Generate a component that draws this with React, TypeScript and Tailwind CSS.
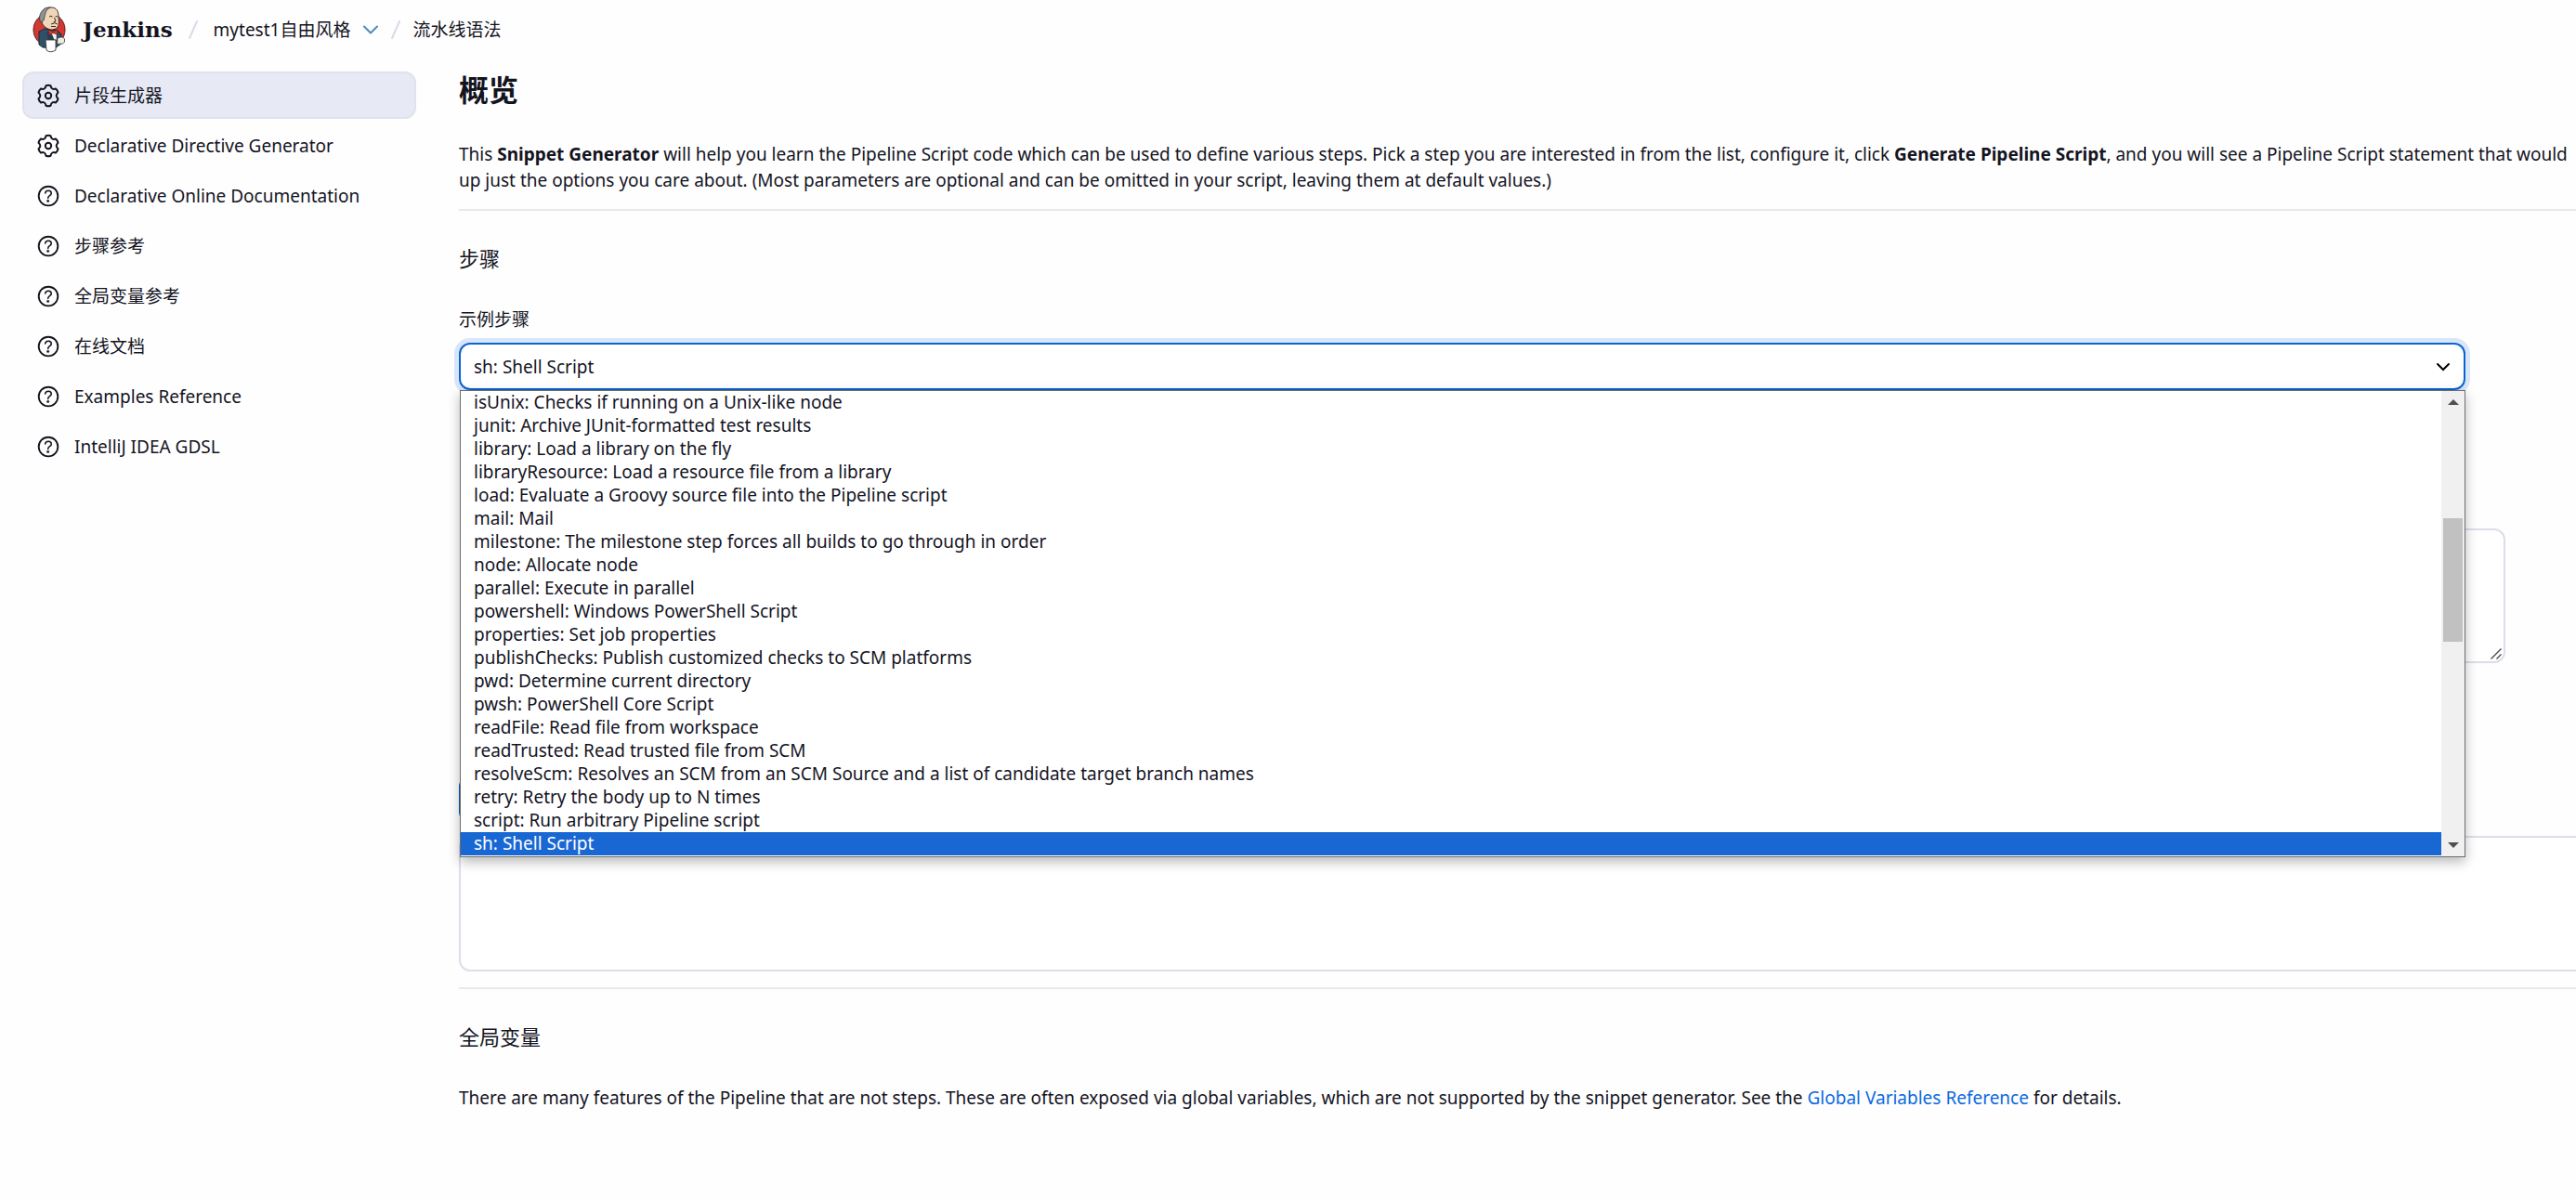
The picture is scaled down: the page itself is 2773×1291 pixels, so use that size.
import { useState } from "react";
import { ChevronDown } from "lucide-react";
import { IoHelpCircleOutline } from "react-icons/io5";

const sidebarItems = [
  { label: "片段生成器", icon: "settings", active: true },
  { label: "Declarative Directive Generator", icon: "settings" },
  { label: "Declarative Online Documentation", icon: "help" },
  { label: "步骤参考", icon: "help" },
  { label: "全局变量参考", icon: "help" },
  { label: "在线文档", icon: "help" },
  { label: "Examples Reference", icon: "help" },
  { label: "IntelliJ IDEA GDSL", icon: "help" },
];

const steps = [
  "isUnix: Checks if running on a Unix-like node",
  "junit: Archive JUnit-formatted test results",
  "library: Load a library on the fly",
  "libraryResource: Load a resource file from a library",
  "load: Evaluate a Groovy source file into the Pipeline script",
  "mail: Mail",
  "milestone: The milestone step forces all builds to go through in order",
  "node: Allocate node",
  "parallel: Execute in parallel",
  "powershell: Windows PowerShell Script",
  "properties: Set job properties",
  "publishChecks: Publish customized checks to SCM platforms",
  "pwd: Determine current directory",
  "pwsh: PowerShell Core Script",
  "readFile: Read file from workspace",
  "readTrusted: Read trusted file from SCM",
  "resolveScm: Resolves an SCM from an SCM Source and a list of candidate target branch names",
  "retry: Retry the body up to N times",
  "script: Run arbitrary Pipeline script",
  "sh: Shell Script",
];

const JenkinsLogo = () => (
  <svg viewBox="0 0 36 50" className="h-[50px] w-9" aria-hidden="true">
    <ellipse cx="18" cy="25" rx="17" ry="17.5" fill="#d33833" stroke="#5b1a18" strokeWidth="1" />
    {/* Suit */}
    <path d="M7 27 L13 24 L27 26 L31 30 L31 40 L24 45 L11 44 L7 41 Z" fill="#2f5066" stroke="#1b2c38" strokeWidth="1" />
    <path d="M19 28 L26 29 L26 36 L22 36 Z" fill="#f5f5f2" stroke="#33434d" strokeWidth=".6" />
    <path d="M21 30 L24 37 L17 37 L15 27 Z" fill="#24404f" />
    {/* Head */}
    <path d="M10 11 C10 4 15 1 20 1 C26 1 28 5 28 11 L28.500 18 C28 23 24 25 20 25 C14 24 11 20 10 17 Z" fill="#f0d6b7" stroke="#231f20" strokeWidth=".9" />
    <path d="M9 17 C6 13 8 6 12 3 C14 1 17 1 19 1 C14 4 14 7 13 11 L12 15 Z" fill="#8d9294" stroke="#3a3a3a" strokeWidth=".8" />
    <path d="M18 11 q2 -1.500 3.500 0 M24.500 11 q1.500 -1 2.500 0 M23.500 12 L25 16 L22.500 17 M20 19 q4 -2.500 7 0 M20 21.500 h5" fill="none" stroke="#3a2a22" strokeWidth="1" />
    {/* Bow tie */}
    <path d="M17 25 L22 27 L27 25 L27 30 L22 28.500 L18 31 Z" fill="#d33833" stroke="#7c1714" strokeWidth=".7" />
    {/* Mug and hand */}
    <path d="M27 34 q6 -2.500 7.500 1 q1 4 -2 5 l-6 .5 z" fill="#f0ece4" stroke="#3a3a3a" strokeWidth=".8" />
    <path d="M14 36 L25 36 L25 47 Q19 50.500 15 47 Z" fill="#fff" stroke="#3a3a3a" strokeWidth=".9" />
  </svg>
);

const GearIcon = () => (
  <svg
    viewBox="-1 -1 26 26"
    className="mx-[2px] size-[26px]"
    fill="none"
    stroke="currentColor"
    strokeWidth="2"
    strokeLinejoin="round"
    aria-hidden="true"
  >
    <path d="M9.530 1.280Q12 0.400 14.470 1.280Q15.400 6.100 20.040 4.500Q22.050 6.200 22.520 8.780Q18.800 12 22.520 15.220Q22.050 17.800 20.040 19.500Q15.400 17.900 14.470 22.720Q12 23.600 9.530 22.720Q8.600 17.900 3.960 19.500Q1.950 17.800 1.480 15.220Q5.200 12 1.480 8.780Q1.950 6.200 3.960 4.500Q8.600 6.100 9.530 1.280Z" />
    <circle cx="12" cy="12" r="3.2" />
  </svg>
);

const Separator = () => (
  <svg viewBox="0 0 10 20" className="h-5 w-[10px]" aria-hidden="true">
    <path d="M9 1L1 19" stroke="#d9dce6" strokeWidth="2" strokeLinecap="round" />
  </svg>
);

const Header = () => (
  <header className="flex h-16 items-center pl-[35px]">
    <a href="#" className="flex items-center gap-[18px]">
      <JenkinsLogo />
      <span className="font-['DejaVu_Serif',serif] text-[23px] font-bold">Jenkins</span>
    </a>
    <nav className="flex items-center" aria-label="Breadcrumb">
      <span className="mx-[17px]">
        <Separator />
      </span>
      <a href="#">mytest1自由风格</a>
      <button type="button" aria-label="mytest1自由风格" className="mx-2">
        <ChevronDown className="size-7 text-[#4f8cc0]" strokeWidth={1.8} />
      </button>
      <Separator />
      <a href="#" className="ml-[13px]">
        流水线语法
      </a>
    </nav>
  </header>
);

const Sidebar = () => (
  <aside className="w-[424px] shrink-0">
    <ul className="flex flex-col gap-[3px]">
      {sidebarItems.map((item) => (
        <li key={item.label}>
          <a
            href="#"
            className={
              item.active
                ? "flex h-[51px] items-center gap-[13px] rounded-xl border-2 border-[#e0e2ec] bg-[#e7eaf4] px-[11px]"
                : "flex h-[51px] items-center gap-[13px] rounded-xl border-2 border-transparent px-[11px]"
            }
          >
            {item.icon === "settings" ? (
              <GearIcon />
            ) : (
              <IoHelpCircleOutline className="size-[30px] stroke-current stroke-[8px]" />
            )}
            {item.label}
          </a>
        </li>
      ))}
    </ul>
  </aside>
);

type StepMenuProps = {
  value: string;
  onSelect: (step: string) => void;
};

const StepMenu = ({ value, onSelect }: StepMenuProps) => (
  <div className="absolute top-full right-0 left-px z-10 flex border border-[#6b6d70] bg-white shadow-[0_5px_12px_rgba(0,0,0,0.28)]">
    <ul role="listbox" aria-label="示例步骤" className="flex-1 pb-px">
      {steps.map((step) => (
        <li
          key={step}
          role="option"
          aria-selected={step === value}
          onClick={() => onSelect(step)}
          className={
            step === value
              ? "h-[25px] bg-[#1967d2] pl-[14px] leading-[25px] text-white"
              : "h-[25px] pl-[14px] leading-[25px]"
          }
        >
          {step}
        </li>
      ))}
    </ul>
    {/* Scrollbar */}
    <div className="flex w-[25px] flex-col items-center bg-[#f0f0f0] py-[9px]">
      <svg viewBox="0 0 12 6" className="h-[6px] w-3" aria-hidden="true">
        <path d="M6 0L12 6H0Z" fill="#505050" />
      </svg>
      <div className="mt-[122px] h-[133px] w-[21px] bg-[#c1c1c1]" />
      <svg viewBox="0 0 12 6" className="mt-auto h-[6px] w-3" aria-hidden="true">
        <path d="M0 0H12L6 6Z" fill="#505050" />
      </svg>
    </div>
  </div>
);

const App = () => {
  const [step, setStep] = useState("sh: Shell Script");

  return (
    <div className="min-h-screen overflow-hidden bg-[#fefefe] font-['Noto_Sans','Noto_Sans_CJK_SC',sans-serif] text-[19px] leading-7 text-[#14141f]">
      <Header />
      <div className="flex gap-[46px] pt-[13px] pl-6">
        <Sidebar />
        <main className="min-w-0 flex-1">
          <h1 className="text-[32px] leading-10 font-bold">概览</h1>
          <p className="mt-[35px] whitespace-nowrap">
            This <b>Snippet Generator</b> will help you learn the Pipeline Script code which can be used to define various
            steps. Pick a step you are interested in from the list, configure it, click <b>Generate Pipeline Script</b>,
            and you will see a Pipeline Script statement that would
            <br />
            up just the options you care about. (Most parameters are optional and can be omitted in your script, leaving
            them at default values.)
          </p>
          <hr className="mt-[17px] border-t-2 border-[#e9e9ed]" />

          <h2 className="mt-[37px] text-[22px] leading-7">步骤</h2>
          <label htmlFor="step" className="mt-[38px] block">
            示例步骤
          </label>
          <div className="relative mt-[11px] mr-[119px]">
            <select
              id="step"
              value={step}
              onChange={(e) => setStep(e.target.value)}
              className="block h-[51px] w-full appearance-none rounded-xl border-2 border-[#0b64d0] bg-white px-[14px] shadow-[0_0_0_5px_#d8e6fa] outline-none"
            >
              {steps.map((s) => (
                <option key={s}>{s}</option>
              ))}
            </select>
            <svg
              viewBox="0 0 16 10"
              className="pointer-events-none absolute top-[21px] right-4 h-[10px] w-4"
              fill="none"
              aria-hidden="true"
            >
              <path d="M2 2L8 8L14 2" stroke="#000" strokeWidth="2" strokeLinecap="round" />
            </svg>
            <StepMenu value={step} onSelect={setStep} />
          </div>

          <div className="relative mt-[149px] mr-[76px] ml-8">
            <textarea
              aria-label="Shell Script"
              className="block h-[145px] w-full resize-none rounded-xl border-2 border-[#dcdee9] bg-white"
            />
            <svg
              viewBox="0 0 12 12"
              className="pointer-events-none absolute right-1 bottom-1 size-3"
              aria-hidden="true"
            >
              <path d="M0.500 11.500L11.500 0.500M6.500 11.500L11.500 6.500" stroke="#4a4a4a" strokeWidth="1.400" />
            </svg>
          </div>

          <button
            type="button"
            aria-label="Generate Pipeline Script"
            className="mt-[121px] block h-[51px] w-52 rounded-xl bg-[#0b5cad]"
          />
          <textarea
            aria-label="Pipeline Script"
            readOnly
            className="mt-[14px] -mr-5 block h-[146px] w-[calc(100%+20px)] resize-none rounded-xl border-2 border-[#dcdee9] bg-white"
          />
          <hr className="mt-[17px] border-t-2 border-[#e9e9ed]" />

          <h2 className="mt-[37px] text-[22px] leading-7">全局变量</h2>
          <p className="mt-[38px]">
            There are many features of the Pipeline that are not steps. These are often exposed via global variables,
            which are not supported by the snippet generator. See the{" "}
            <a href="#" className="text-[#0b6ae0]">
              Global Variables Reference
            </a>{" "}
            for details.
          </p>
        </main>
      </div>
    </div>
  );
};

export default App;
